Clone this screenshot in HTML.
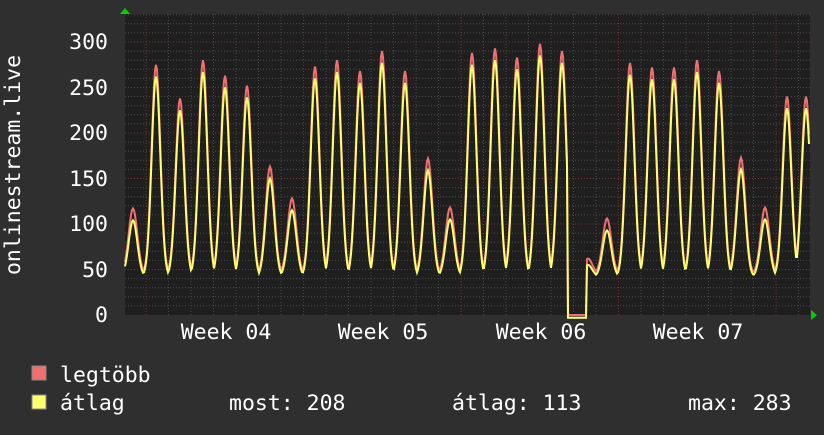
<!DOCTYPE html>
<html><head><meta charset="utf-8"><style>
body{margin:0;background:#2f2f2f;width:824px;height:430px;overflow:hidden}
svg text{font-family:"DejaVu Sans Mono","Liberation Mono",monospace;fill:#fff;font-size:21.5px}
</style></head><body>
<svg id="s" width="824" height="430" xmlns="http://www.w3.org/2000/svg">
<rect width="824" height="430" fill="#2f2f2f"/>
<rect x="125" y="14" width="685" height="301" fill="#1f1f1f"/>
<g id="grid"></g>
<path id="red" fill="none" stroke="#f07070" stroke-width="2"/>
<path id="yel" fill="none" stroke="#ffff70" stroke-width="2"/>
<polygon points="120,14 125,8 130,14" fill="#00d000"/>
<polygon points="811,310 817,315 811,320" fill="#00d000"/>
<g text-anchor="end">
<text x="108" y="49">300</text><text x="108" y="95">250</text><text x="108" y="140">200</text>
<text x="108" y="186">150</text><text x="108" y="231">100</text><text x="108" y="277">50</text><text x="108" y="322">0</text>
</g>
<text transform="translate(20,165) rotate(-90)" text-anchor="middle">onlinestream.live</text>
<g text-anchor="middle">
<text x="226" y="339">Week 04</text><text x="383" y="339">Week 05</text>
<text x="541" y="339">Week 06</text><text x="698" y="339">Week 07</text>
</g>
<rect x="32" y="366" width="14" height="14" fill="#f07070" stroke="#888" stroke-width="1"/>
<rect x="32" y="395" width="14" height="14" fill="#ffff70" stroke="#888" stroke-width="1"/>
<text x="60" y="382">legtöbb</text>
<text x="60" y="410">átlag</text>
<text x="229" y="410">most: 208</text>
<text x="452" y="410">átlag: 113</text>
<text x="688" y="410">max: 283</text>
</svg>
<script>
var g=document.getElementById('grid'),h='';
function Y(v){return 315-v*0.91;}
for(var v=10;v<=330;v+=10){var y=Y(v);if(y<14)break;var maj=v%50==0;
h+='<line x1="125" x2="810" y1="'+y+'" y2="'+y+'" stroke="'+(maj?'#6e3434':'#4a4a4a')+'" stroke-dasharray="1,2"/>';}
for(var x=146;x<810;x+=22.5){var maj=Math.abs(((x-146)/157.5)-Math.round((x-146)/157.5))<0.01;
h+='<line y1="14" y2="315" x1="'+x+'" x2="'+x+'" stroke="'+(maj?'#6e3434':'#4a4a4a')+'" stroke-dasharray="1,2"/>';}
g.innerHTML=h;
var pk=[[133,117],[156,275],[180,238],[203,280],[225,263],[247,252],[270,163],[292,128],[315,273],[337,280],[360,268],[382,290],[405,268],[428,172],[450,118],[472,288],[495,293],[517,283],[540,298],[562,290],[588,62],[607,106],[630,277],[652,272],[674,272],[697,280],[719,268],[741,173],[765,118],[787,240],[806,240]];
function f(x,avg){var v=45;for(var i=0;i<pk.length;i++){var p=pk[i],d=(x-p[0])/5.5;var pv=avg?(p[1]>100?p[1]-10:p[1]-4):p[1];v=Math.max(v,45+(pv-45)*Math.exp(-d*d*0.8));}
if(x>=568&&x<=586)v=0;return v;}
function path(avg){var d='';for(var x=125;x<=809;x+=1){d+=(x==125?'M':'L')+x+','+Y(f(x,avg)-(avg?3:0)).toFixed(1);}return d;}
document.getElementById('red').setAttribute('d',path(false));
document.getElementById('yel').setAttribute('d',path(true));
</script>
</body></html>
